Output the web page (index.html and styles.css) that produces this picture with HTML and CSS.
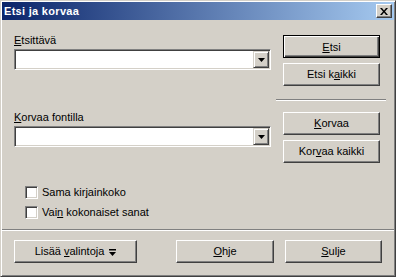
FILE: index.html
```html
<!DOCTYPE html>
<html lang="fi">
<head>
    <meta charset="UTF-8">
    <title>Etsi ja korvaa</title>
    <link rel="stylesheet" href="styles.css">
</head>
<body>
    <div class="window">
        <div class="titlebar">
            <span class="title">Etsi ja korvaa</span>
            <button class="close-btn" aria-label="Sulje">
                <svg width="8" height="7" viewBox="0 0 8 7"><path d="M0 0h2l2 2.4 2-2.4h2l-3 3.5 3 3.5h-2l-2-2.4-2 2.4h-2l3-3.5z" fill="#000"/></svg>
            </button>
        </div>
        <div class="content">
            <div class="main">
                <div class="fields">
                    <div class="field-label"><u>E</u>tsittävä</div>
                    <div class="combo">
                        <div class="combo-text"></div>
                        <span class="combo-btn"><svg width="7" height="4" viewBox="0 0 7 4"><path d="M0 0h7l-3.5 4z" fill="#000"/></svg></span>
                    </div>
                    <div class="field-label second"><u>K</u>orvaa fontilla</div>
                    <div class="combo">
                        <div class="combo-text"></div>
                        <span class="combo-btn"><svg width="7" height="4" viewBox="0 0 7 4"><path d="M0 0h7l-3.5 4z" fill="#000"/></svg></span>
                    </div>
                </div>
                <div class="actions">
                    <button class="btn default"><span><u>E</u>tsi</span></button>
                    <button class="btn"><span>Etsi k<u>a</u>ikki</span></button>
                    <div class="sep short"></div>
                    <button class="btn"><span><u>K</u>orvaa</span></button>
                    <button class="btn"><span>Kor<u>v</u>aa kaikki</span></button>
                </div>
            </div>
            <div class="options">
                <label class="check-row"><span class="checkbox"></span><span>Sama kir<u>j</u>ainkoko</span></label>
                <label class="check-row"><span class="checkbox"></span><span>Vai<u>n</u> kokonaiset sanat</span></label>
            </div>
            <div class="sep full"></div>
            <div class="footer">
                <button class="btn wide"><span>Lisää <u>v</u>alintoja</span>
                    <svg class="more-icon" width="7" height="7" viewBox="0 0 7 7"><path d="M0 0h7v1.5h-7z M0 3h7l-3.5 4z" fill="#000"/></svg>
                </button>
                <button class="btn push"><span><u>O</u>hje</span></button>
                <button class="btn"><span><u>S</u>ulje</span></button>
            </div>
        </div>
    </div>
</body>
</html>
```

FILE: styles.css
```css
body {
    margin: 0;
    font-family: "Liberation Sans", Arial, sans-serif;
    font-size: 11px;
    color: #000;
    background: #d4d0c8;
}
.window {
    box-sizing: border-box;
    width: 396px;
    height: 277px;
    padding: 1px;
    background: #d4d0c8;
    border: 1px solid;
    border-color: #d4d0c8 #404040 #404040 #d4d0c8;
    box-shadow: inset 1px 1px #fff, inset -1px -1px #808080;
    display: flex;
    flex-direction: column;
}
.titlebar {
    height: 18px;
    display: flex;
    align-items: center;
    justify-content: space-between;
    padding: 0 2px;
    background: linear-gradient(to right, #0a246a, #a6caf0);
}
.title {
    color: #fff;
    font-weight: bold;
    line-height: 18px;
    letter-spacing: 0.3px;
}
.close-btn {
    box-sizing: border-box;
    width: 16px;
    height: 14px;
    padding: 0;
    display: flex;
    align-items: center;
    justify-content: center;
    background: #d4d0c8;
    border: 1px solid;
    border-color: #fff #404040 #404040 #fff;
    box-shadow: inset -1px -1px #808080;
}
.content {
    flex: 1;
    padding: 14px 12px 0;
    display: flex;
    flex-direction: column;
}
.main {
    display: grid;
    grid-template-columns: 257px 97px;
    column-gap: 12px;
}
.fields { display: flex; flex-direction: column; }
.field-label {
    line-height: 13px;
    margin-bottom: 2px;
}
.field-label.second { margin-top: 41px; }
.combo {
    box-sizing: border-box;
    height: 21px;
    display: flex;
    padding: 1px;
    background: #fff;
    border: 1px solid;
    border-color: #808080 #fff #fff #808080;
    box-shadow: inset 1px 1px #404040, inset -1px -1px #d4d0c8;
}
.combo-text { flex: 1; }
.combo-btn {
    box-sizing: border-box;
    width: 16px;
    height: 17px;
    display: flex;
    align-items: center;
    justify-content: center;
    background: #d4d0c8;
    border: 1px solid;
    border-color: #d4d0c8 #404040 #404040 #d4d0c8;
    box-shadow: inset 1px 1px #fff, inset -1px -1px #808080;
}
.actions {
    display: flex;
    flex-direction: column;
    gap: 5px;
    margin-top: 1px;
}
.btn {
    box-sizing: border-box;
    width: 97px;
    height: 23px;
    padding: 0;
    font: inherit;
    color: #000;
    display: flex;
    align-items: center;
    justify-content: center;
    line-height: 13px;
    background: #d4d0c8;
    border: 1px solid;
    border-color: #fff #404040 #404040 #fff;
    box-shadow: inset -1px -1px #808080;
}
.btn.default {
    border-color: #000;
    box-shadow: inset 1px 1px #fff, inset -1px -1px #404040, inset -2px -2px #808080;
    padding-top: 2px;
}
.sep {
    border-top: 1px solid #808080;
    border-bottom: 1px solid #fff;
    height: 0;
}
.sep.short { margin: 8px -6px 6px -7px; }
.sep.full { margin: 6px -12px 0; }
.options {
    display: flex;
    flex-direction: column;
    margin-top: 20px;
    padding-left: 11px;
}
.check-row {
    height: 20px;
    display: flex;
    align-items: flex-start;
    gap: 4px;
    line-height: 13px;
    padding-top: 3px;
    box-sizing: border-box;
}
.checkbox {
    box-sizing: border-box;
    width: 13px;
    height: 13px;
    background: #fff;
    border: 1px solid;
    border-color: #808080 #fff #fff #808080;
    box-shadow: inset 1px 1px #404040, inset -1px -1px #d4d0c8;
}
.footer {
    display: flex;
    gap: 11px;
    margin-top: 9px;
}
.btn.wide { width: 123px; gap: 5px; }
.btn.push { margin-left: auto; width: 98px; }
.more-icon { margin-top: 1px; }
```
